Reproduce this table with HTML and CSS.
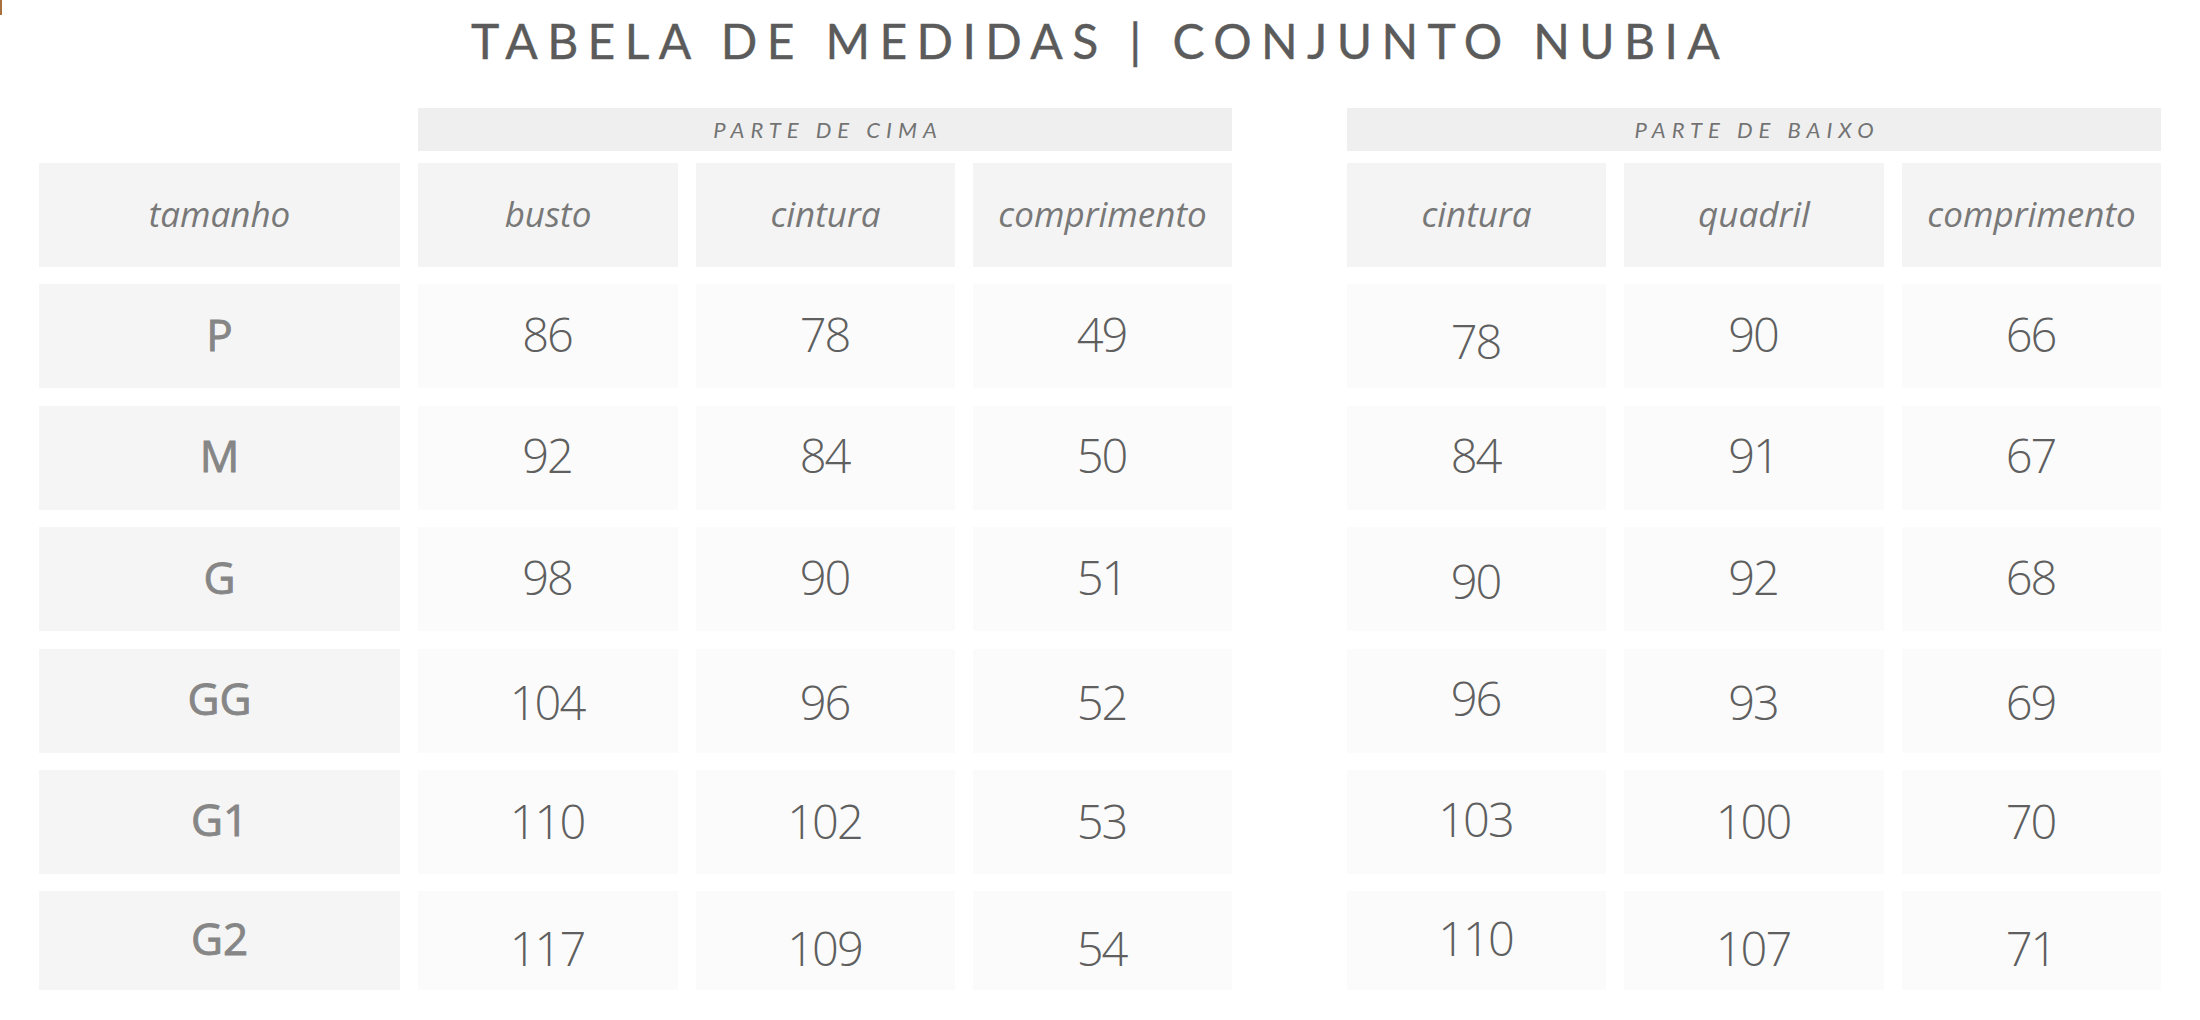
FILE: index.html
```html
<!DOCTYPE html>
<html lang="pt-BR">
<head>
<meta charset="utf-8">
<title>Tabela de medidas | Conjunto Nubia</title>
<link rel="stylesheet" href="styles.css">
</head>
<body>
<div class="corner-mark"></div>
<h1 class="title">TABELA DE MEDIDAS | CONJUNTO NUBIA</h1>
<main class="tables">
  <section class="block block-top">
    <div class="grid grid-top group-row">
      <div class="group-bar span-3">PARTE DE CIMA</div>
    </div>
    <div class="grid grid-top body">
      <div class="cell head">tamanho</div>
      <div class="cell head">busto</div>
      <div class="cell head">cintura</div>
      <div class="cell head">comprimento</div>

      <div class="cell size">P</div>
      <div class="cell num">86</div>
      <div class="cell num">78</div>
      <div class="cell num">49</div>

      <div class="cell size">M</div>
      <div class="cell num">92</div>
      <div class="cell num">84</div>
      <div class="cell num">50</div>

      <div class="cell size">G</div>
      <div class="cell num">98</div>
      <div class="cell num">90</div>
      <div class="cell num">51</div>

      <div class="cell size">GG</div>
      <div class="cell num dn1">104</div>
      <div class="cell num dn1">96</div>
      <div class="cell num dn1">52</div>

      <div class="cell size">G1</div>
      <div class="cell num dn-s">110</div>
      <div class="cell num dn-s">102</div>
      <div class="cell num dn-s">53</div>

      <div class="cell size">G2</div>
      <div class="cell num dn3">117</div>
      <div class="cell num dn3">109</div>
      <div class="cell num dn3">54</div>
    </div>
  </section>

  <section class="block block-bottom">
    <div class="grid grid-bottom group-row">
      <div class="group-bar span-all">PARTE DE BAIXO</div>
    </div>
    <div class="grid grid-bottom body">
      <div class="cell head">cintura</div>
      <div class="cell head">quadril</div>
      <div class="cell head">comprimento</div>

      <div class="cell num dn2">78</div>
      <div class="cell num">90</div>
      <div class="cell num">66</div>

      <div class="cell num">84</div>
      <div class="cell num">91</div>
      <div class="cell num">67</div>

      <div class="cell num dn1">90</div>
      <div class="cell num">92</div>
      <div class="cell num">68</div>

      <div class="cell num">96</div>
      <div class="cell num dn1">93</div>
      <div class="cell num dn1">69</div>

      <div class="cell num">103</div>
      <div class="cell num dn-s">100</div>
      <div class="cell num dn-s">70</div>

      <div class="cell num">110</div>
      <div class="cell num dn3">107</div>
      <div class="cell num dn3">71</div>
    </div>
  </section>
</main>
</body>
</html>
```

FILE: styles.css
```css
* {
  box-sizing: border-box;
}

html, body {
  margin: 0;
  padding: 0;
  background: #ffffff;
}

body {
  width: 2200px;
  height: 1020px;
  overflow: hidden;
  font-family: "Open Sans", "Noto Sans", sans-serif;
  position: relative;
}

.corner-mark {
  position: absolute;
  top: 0;
  left: 0;
  width: 2px;
  height: 15px;
  background: #a8703f;
}

.title {
  margin: 0;
  padding-top: 13px;
  height: 108px;
  font-family: "Lato", "Open Sans", sans-serif;
  font-weight: 400;
  font-size: 48px;
  line-height: 56px;
  letter-spacing: 9.4px;
  text-align: center;
  color: #5b5b5b;
  -webkit-text-stroke: 0.4px #5b5b5b;
}

.tables {
  display: flex;
  gap: 115px;
  padding-left: 39px;
}

.block {
  display: flex;
  flex-direction: column;
}

.grid {
  display: grid;
  column-gap: 18px;
}

.grid-top {
  grid-template-columns: 361px 260px 259px 259px;
}

.grid-bottom {
  grid-template-columns: 259px 260px 259px;
}

.group-row {
  height: 43px;
  margin-bottom: 12px;
}

.group-bar {
  background: #efefef;
  display: flex;
  align-items: center;
  justify-content: center;
  font-family: "Lato", "Open Sans", sans-serif;
  font-style: italic;
  font-size: 22px;
  letter-spacing: 6px;
  color: #737373;
  padding-left: 6px;
}

.span-3 {
  grid-column: 2 / 5;
}

.span-all {
  grid-column: 1 / 4;
}

.body {
  grid-template-rows: repeat(6, 104px) 99px;
  row-gap: 17.4px;
}

.cell {
  display: flex;
  align-items: center;
  justify-content: center;
  background: #fbfbfb;
}

.head {
  background: #f4f4f4;
  font-style: italic;
  font-size: 35px;
  color: #787878;
  padding-bottom: 4px;
}

.size {
  background: #f5f5f5;
  font-size: 44px;
  font-weight: 400;
  color: #868686;
  -webkit-text-stroke: 0.9px #868686;
  padding-bottom: 5px;
}

.num {
  font-size: 47px;
  font-weight: 300;
  letter-spacing: -2px;
  color: #5f5f5f;
  padding-right: 2px;
  padding-bottom: 5px;
}

.dn-s {
  padding-top: 4px;
}

.dn1 {
  padding-top: 8px;
}

.dn2 {
  padding-top: 14px;
}

.dn3 {
  padding-top: 20px;
}
```
